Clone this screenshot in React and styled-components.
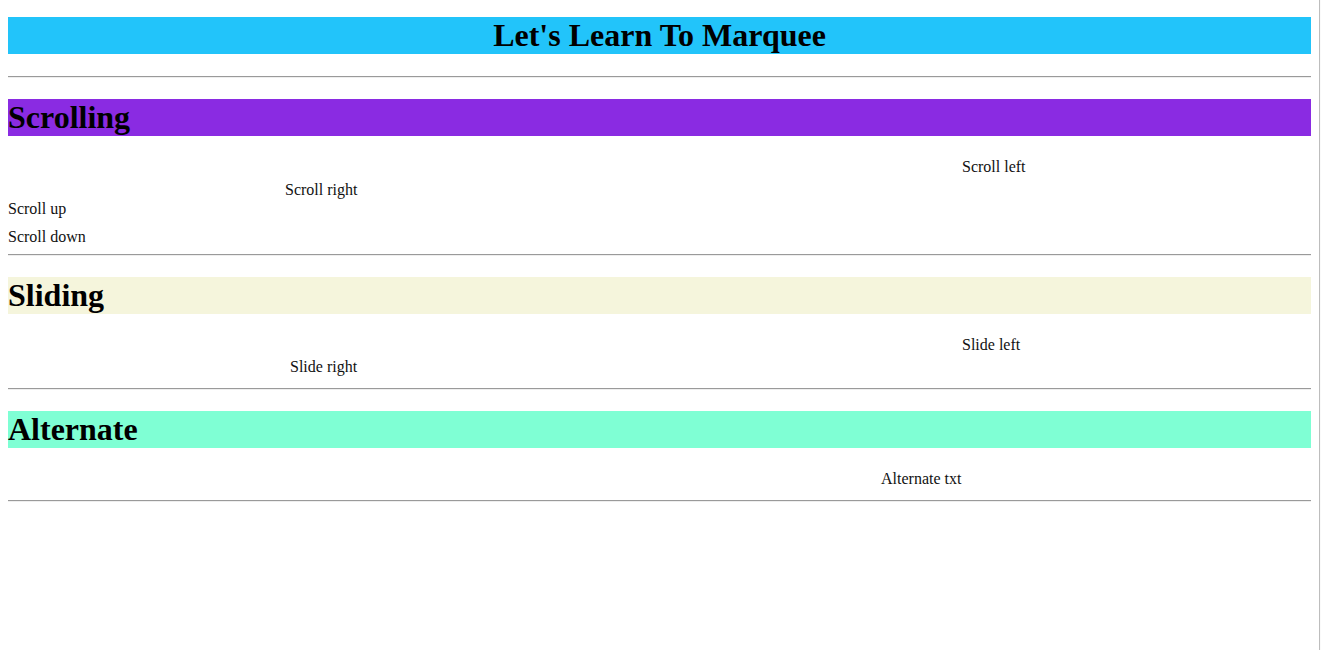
import React from "react";
import styled, { createGlobalStyle } from "styled-components";

const GlobalStyle = createGlobalStyle`
  html, body {
    margin: 0;
    padding: 0;
    background: #fafafa;
  }
  body {
    font-family: "Liberation Serif", "Times New Roman", serif;
    color: #000;
  }
`;

const Page = styled.div`
  width: 1303px;
  min-height: 100vh;
  box-sizing: content-box;
  padding: 17px 8px 0;
  background: #fff;
  border-right: 1px solid #bdbdbd;
  display: flow-root;
`;

const Heading = styled.h1`
  margin: 0 0 22px;
  font-size: 32px;
  font-weight: bold;
  line-height: 37px;
  height: 37px;
  background: ${(p) => p.bg};
  text-align: ${(p) => (p.center ? "center" : "left")};
`;

const Rule = styled.hr`
  height: 0;
  border: none;
  border-top: 1px solid #9a9a9a;
  border-bottom: 1px solid #eeeeee;
  margin: ${(p) => p.before}px 0 21px;
`;

const Track = styled.div`
  height: ${(p) => p.h}px;
  overflow: hidden;
  white-space: nowrap;
  font-size: 16px;
  line-height: 18px;
  color: #111;
`;

const Moving = styled.span`
  display: inline-block;
  margin-left: ${(p) => p.x}px;
`;

const Section = ({ title, bg, rows }) => (
  <>
    <Heading bg={bg}>{title}</Heading>
    {rows.map((r) => (
      <Track key={r.text} h={r.h}>
        <Moving x={r.x}>{r.text}</Moving>
      </Track>
    ))}
  </>
);

export default function App() {
  return (
    <>
      <GlobalStyle />
      <Page>
        <Heading bg="#22c4fa" center>
          Let's Learn To Marquee
        </Heading>
        <Rule before={0} />
        <Section
          title="Scrolling"
          bg="#8a2be2"
          rows={[
            { text: "Scroll left", x: 954, h: 23 },
            { text: "Scroll right", x: 277, h: 19 },
            { text: "Scroll up", x: 0, h: 28 },
            { text: "Scroll down", x: 0, h: 18 },
          ]}
        />
        <Rule before={8} />
        <Section
          title="Sliding"
          bg="#f5f5dc"
          rows={[
            { text: "Slide left", x: 954, h: 22 },
            { text: "Slide right", x: 282, h: 22 },
          ]}
        />
        <Rule before={8} />
        <Section
          title="Alternate"
          bg="#7fffd4"
          rows={[{ text: "Alternate txt", x: 873, h: 22 }]}
        />
        <Rule before={8} />
      </Page>
    </>
  );
}
